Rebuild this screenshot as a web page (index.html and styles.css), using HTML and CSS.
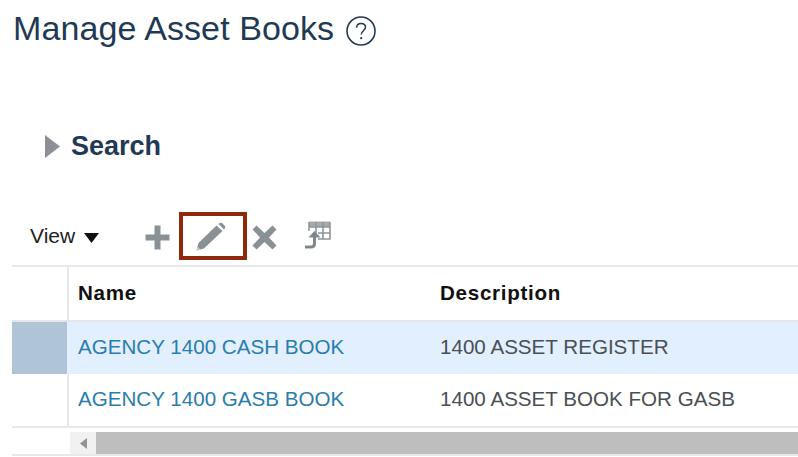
FILE: index.html
```html
<!DOCTYPE html>
<html lang="en">
<head>
  <meta charset="UTF-8">
  <title>Manage Asset Books</title>
  <link rel="stylesheet" href="styles.css">
</head>
<body>
<main>
  <div class="title-row">
    <h1>Manage Asset Books</h1>
    <svg class="help" width="30" height="30" viewBox="0 0 30 30">
      <circle cx="15" cy="15" r="14" fill="none" stroke="#1f3a54" stroke-width="1.6"/>
      <path d="M10.6 11.8c0-2.7 2-4.4 4.5-4.4s4.4 1.6 4.4 3.9c0 3.4-4.3 3.5-4.3 7.2" fill="none" stroke="#1f3a54" stroke-width="1.5"/>
      <circle cx="15.2" cy="22.2" r="1.1" fill="#1f3a54"/>
    </svg>
  </div>

  <div class="search-row">
    <svg class="disclose" width="15" height="23" viewBox="0 0 15 23"><path d="M0 0L15 11.5L0 23Z" fill="#8c9096"/></svg>
    <h2>Search</h2>
  </div>

  <div class="toolbar">
    <span class="view">View</span>
    <svg class="view-arrow" width="15" height="10" viewBox="0 0 15 10"><path d="M0 0H15L7.5 10Z" fill="#111"/></svg>
    <svg class="add" width="25" height="25" viewBox="0 0 25 25"><path d="M9.5 0.500H15.500V9.500H24.500V15.500H15.500V24.500H9.500V15.500H0.500V9.500H9.500Z" fill="#8a9195"/></svg>
    <div class="edit-box">
      <svg width="30" height="29" viewBox="0 0 30 29">
        <path d="M0.500 28.500L2.500 21L20.500 3.500L26.500 9L8 26.500Z" fill="#8a9195"/>
        <path d="M22.500 2C24 0.500 25.500 0.500 26.500 1.500L28.500 3.500C29.500 4.500 29.500 6 28 7.500Z" fill="#8a9195"/>
        <path d="M0.500 28.500L1.500 24.500L4.500 27.500Z" fill="#c4c8ca"/>
      </svg>
    </div>
    <svg class="del" width="25" height="25" viewBox="0 0 25 25"><path d="M4.500 0.500L12.500 8L20.500 0.500L24.500 4.500L17 12.500L24.500 20.500L20.500 24.500L12.500 17L4.500 24.500L0.500 20.500L8 12.500L0.500 4.500Z" fill="#8a9195"/></svg>
    <svg class="detach" width="28" height="28" viewBox="0 0 28 28">
      <path d="M5 0.500H26V6H5Z" fill="#a4aaad"/>
      <g fill="none" stroke="#8f969a" stroke-width="1.600">
        <path d="M5 1V10M26 1V18H14"/>
        <path d="M12 1V12M19 1V18M5 6H26M14 12H26"/>
      </g>
      <path d="M1 26H7Q10.500 26 10.500 22.500V15" fill="none" stroke="#7f878b" stroke-width="3"/>
      <path d="M4.500 16.500L10.500 10L16.500 16.500Z" fill="#7f878b"/>
    </svg>
  </div>

  <div class="grid">
    <div class="grid-row head">
      <div class="stub"></div>
      <div class="cell name">Name</div>
      <div class="cell">Description</div>
    </div>
    <div class="grid-row selected">
      <div class="stub"></div>
      <div class="cell name"><a href="#">AGENCY 1400 CASH BOOK</a></div>
      <div class="cell">1400 ASSET REGISTER</div>
    </div>
    <div class="grid-row">
      <div class="stub"></div>
      <div class="cell name"><a href="#">AGENCY 1400 GASB BOOK</a></div>
      <div class="cell">1400 ASSET BOOK FOR GASB</div>
    </div>
  </div>

  <div class="scrollbar">
    <div class="scroll-btn"><svg width="7" height="11" viewBox="0 0 7 11"><path d="M7 0V11L0 5.500Z" fill="#8f9396"/></svg></div>
    <div class="scroll-thumb"></div>
  </div>
</main>
</body>
</html>
```

FILE: styles.css
```css
html, body {
  margin: 0;
  padding: 0;
  background: #fff;
}
body {
  font-family: "Liberation Sans", Arial, sans-serif;
  overflow: hidden;
}
main {
  width: 798px;
  height: 457px;
  padding-left: 12px;
  box-sizing: border-box;
  overflow: hidden;
}
.title-row {
  display: flex;
  align-items: center;
  height: 57px;
  padding-left: 1px;
}
h1 {
  margin: 0;
  font-size: 34px;
  font-weight: 400;
  letter-spacing: 0.1px;
  color: #1f3a54;
}
.help {
  margin-left: 12px;
  margin-top: 4px;
}
.search-row {
  display: flex;
  align-items: center;
  height: 32px;
  margin-top: 73px;
  padding-left: 33px;
}
h2 {
  margin: 0 0 0 11px;
  font-size: 27px;
  font-weight: 700;
  color: #1f3a54;
}
.toolbar {
  display: flex;
  align-items: center;
  height: 58px;
  margin-top: 45px;
  padding-left: 18px;
}
.view {
  font-size: 21px;
  color: #222;
}
.view-arrow {
  margin: 3px 0 0 9px;
}
.add {
  margin: 2px 0 0 46px;
}
.edit-box {
  box-sizing: border-box;
  display: flex;
  align-items: center;
  justify-content: center;
  width: 68px;
  height: 48px;
  margin-left: 9px;
  padding-right: 4px;
  border: 4px solid #8e2a0b;
}
.del {
  margin: 2px 0 0 5px;
}
.detach {
  margin-left: 27px;
  margin-top: -2px;
}
.grid {
  border-top: 2px solid #e6e8ea;
}
.grid-row {
  display: flex;
  height: 52px;
}
.head {
  height: 53px;
  border-bottom: 2px solid #e4e6ec;
}
.stub {
  box-sizing: border-box;
  width: 57px;
  border-right: 2px solid #e6e8ea;
}
.cell {
  display: flex;
  align-items: center;
  padding-bottom: 2px;
  font-size: 20.6px;
  color: #4a4f53;
}
.name {
  width: 371px;
  padding-left: 9px;
  box-sizing: border-box;
}
.head .cell {
  font-size: 20.6px;
  letter-spacing: 0.7px;
  font-weight: 700;
  color: #111;
}
.selected {
  background: #e2efff;
}
.selected .stub {
  background: linear-gradient(#afc4d6, #afc4d6) no-repeat;
  background-size: 56px 100%;
  background-clip: border-box;
  background-origin: border-box;
  border-right-color: #e2efff;
}
a {
  color: #2a7dac;
  text-decoration: none;
}
.scrollbar {
  display: flex;
  height: 30px;
  padding: 4px 0 0 58px;
  box-sizing: border-box;
  border-top: 2px solid #e6e8ea;
  border-bottom: 2px solid #e6e8ea;
}
.scroll-btn {
  display: flex;
  align-items: center;
  justify-content: center;
  width: 26px;
  background: #f1f1f1;
}
.scroll-thumb {
  flex: 1;
  background: #bebebe;
}
```
